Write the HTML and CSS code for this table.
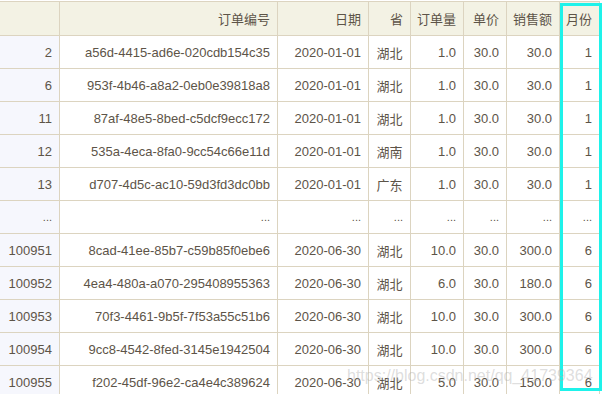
FILE: index.html
```html
<!DOCTYPE html>
<html lang="zh-CN">
<head>
<meta charset="utf-8">
<title>DataFrame</title>
<link rel="stylesheet" href="styles.css">
</head>
<body>
<div class="frame">
<table class="df">
  <colgroup>
    <col class="c-idx"><col class="c-id"><col class="c-date"><col class="c-prov"><col class="c-qty"><col class="c-price"><col class="c-amt"><col class="c-month">
  </colgroup>
  <thead>
    <tr><th class="corner"></th><th>订单编号</th><th>日期</th><th>省</th><th>订单量</th><th>单价</th><th>销售额</th><th>月份</th></tr>
  </thead>
  <tbody>
    <tr><th class="idx">2</th><td>a56d-4415-ad6e-020cdb154c35</td><td>2020-01-01</td><td class="cjk">湖北</td><td>1.0</td><td>30.0</td><td>30.0</td><td>1</td></tr>
    <tr><th class="idx">6</th><td>953f-4b46-a8a2-0eb0e39818a8</td><td>2020-01-01</td><td class="cjk">湖北</td><td>1.0</td><td>30.0</td><td>30.0</td><td>1</td></tr>
    <tr><th class="idx">11</th><td>87af-48e5-8bed-c5dcf9ecc172</td><td>2020-01-01</td><td class="cjk">湖北</td><td>1.0</td><td>30.0</td><td>30.0</td><td>1</td></tr>
    <tr><th class="idx">12</th><td>535a-4eca-8fa0-9cc54c66e11d</td><td>2020-01-01</td><td class="cjk">湖南</td><td>1.0</td><td>30.0</td><td>30.0</td><td>1</td></tr>
    <tr><th class="idx">13</th><td>d707-4d5c-ac10-59d3fd3dc0bb</td><td>2020-01-01</td><td class="cjk">广东</td><td>1.0</td><td>30.0</td><td>30.0</td><td>1</td></tr>
    <tr class="ellipsis"><th class="idx">...</th><td>...</td><td>...</td><td>...</td><td>...</td><td>...</td><td>...</td><td>...</td></tr>
    <tr><th class="idx">100951</th><td>8cad-41ee-85b7-c59b85f0ebe6</td><td>2020-06-30</td><td class="cjk">湖北</td><td>10.0</td><td>30.0</td><td>300.0</td><td>6</td></tr>
    <tr><th class="idx">100952</th><td>4ea4-480a-a070-295408955363</td><td>2020-06-30</td><td class="cjk">湖北</td><td>6.0</td><td>30.0</td><td>180.0</td><td>6</td></tr>
    <tr><th class="idx">100953</th><td>70f3-4461-9b5f-7f53a55c51b6</td><td>2020-06-30</td><td class="cjk">湖北</td><td>10.0</td><td>30.0</td><td>300.0</td><td>6</td></tr>
    <tr><th class="idx">100954</th><td>9cc8-4542-8fed-3145e1942504</td><td>2020-06-30</td><td class="cjk">湖北</td><td>10.0</td><td>30.0</td><td>300.0</td><td>6</td></tr>
    <tr><th class="idx">100955</th><td>f202-45df-96e2-ca4e4c389624</td><td>2020-06-30</td><td class="cjk">湖北</td><td>5.0</td><td>30.0</td><td>150.0</td><td>6</td></tr>
  </tbody>
</table>
<div class="highlight"></div>
<div class="watermark">https://blog.csdn.net/qq_41739364</div>
</div>
</body>
</html>
```

FILE: styles.css
```css
html, body {
  margin: 0;
  padding: 0;
  background: #ffffff;
  overflow: hidden;
}

.frame {
  position: relative;
  width: 603px;
  height: 394px;
  overflow: hidden;
}

.df {
  border-collapse: collapse;
  table-layout: fixed;
  width: 600px;
  margin: 1px 0 0 -1px;
  font-family: "Liberation Sans", "Noto Sans CJK SC", sans-serif;
  font-size: 13px;
  color: #5d5448;
}

.c-idx { width: 60px; }
.c-id { width: 218px; }
.c-date { width: 91px; }
.c-prov { width: 42px; }
.c-qty { width: 53px; }
.c-price { width: 43px; }
.c-amt { width: 53px; }
.c-month { width: 40px; }

.df th,
.df td {
  border: 1px solid #dcd4c0;
  height: 32px;
  padding: 0 7px 0 0;
  text-align: right;
  vertical-align: middle;
  white-space: nowrap;
  overflow: hidden;
  font-weight: normal;
}

.df thead th {
  height: 33px;
  background: #f3f2e4;
  font-family: "Noto Sans CJK SC", "Liberation Sans", sans-serif;
  font-size: 13px;
  color: #5d5448;
}

.df tbody th.idx {
  background: #f6f7fd;
}

.df td.cjk {
  font-family: "Noto Sans CJK SC", sans-serif;
  text-align: center;
  padding: 0;
}

.df tr.ellipsis td,
.df tr.ellipsis th {
  font-size: 11px;
}

.highlight {
  position: absolute;
  left: 560px;
  top: 3px;
  width: 36px;
  height: 382px;
  border: 3px solid #1ef2ea;
}

.watermark {
  position: absolute;
  left: 347px;
  top: 367px;
  font-family: "Liberation Sans", sans-serif;
  font-size: 16px;
  color: rgba(170, 170, 170, 0.4);
  white-space: nowrap;
  pointer-events: none;
}
```
